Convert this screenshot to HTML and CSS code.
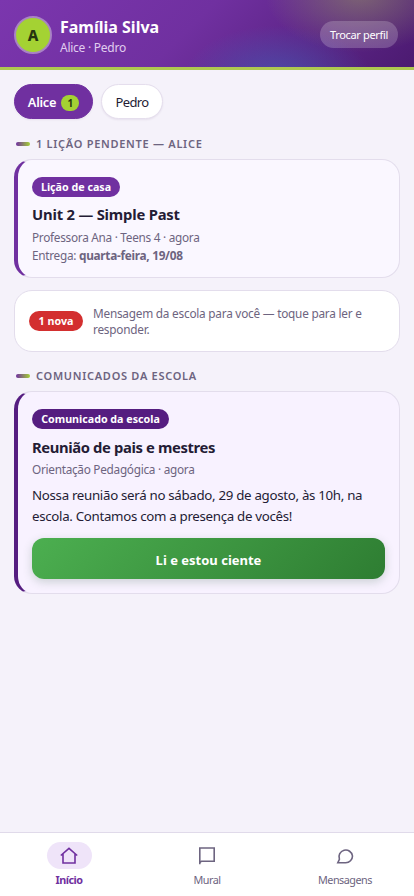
FILE: index.html
```html
<!DOCTYPE html>
<html lang="pt-BR">
<head>
<meta charset="utf-8">
<meta name="viewport" content="width=device-width, initial-scale=1">
<title>Família Silva</title>
<link rel="stylesheet" href="styles.css">
</head>
<body>
<header class="top">
  <div class="avatar">A</div>
  <div class="who">
    <h1>Família Silva</h1>
    <p>Alice · Pedro</p>
  </div>
  <button class="switch">Trocar perfil</button>
</header>
<main>
  <div class="tabs">
    <button class="tab active">Alice <span class="count">1</span></button>
    <button class="tab">Pedro</button>
  </div>
  <h2 class="section first">1 lição pendente — Alice</h2>
  <article class="card lesson">
    <span class="tag">Lição de casa</span>
    <h3 class="unit">Unit 2 — Simple Past</h3>
    <p class="meta">Professora Ana · Teens 4 · agora</p>
    <p class="meta due">Entrega: <b>quarta-feira, 19/08</b></p>
  </article>
  <article class="card notice">
    <span class="tag new">1 nova</span>
    <p>Mensagem da escola para você — toque para ler e<br>responder.</p>
  </article>
  <h2 class="section second">Comunicados da escola</h2>
  <article class="card news">
    <span class="tag">Comunicado da escola</span>
    <h3>Reunião de pais e mestres</h3>
    <p class="meta origin">Orientação Pedagógica · agora</p>
    <p class="body">Nossa reunião será no sábado, 29 de agosto, às 10h, na<br>escola. Contamos com a presença de vocês!</p>
    <button class="ack">Li e estou ciente</button>
  </article>
</main>
<nav class="bottom">
  <a class="item active"><span class="icon"><svg viewBox="0 0 20 20"><path d="M1.800 9.500 10 2.300l8.200 7.200M4 8v9h12V8"/></svg></span><span class="label">Início</span></a>
  <a class="item"><span class="icon"><svg viewBox="0 0 20 20"><path d="M2.800 18.200V2h14.400v13.200H4.500L2.800 16.500"/></svg></span><span class="label">Mural</span></a>
  <a class="item"><span class="icon"><svg viewBox="0 0 20 20"><path d="M17.500 10a6.800 6.800 0 0 1-6.800 6.800H2.800l1.600-3.500A6.800 6.800 0 1 1 17.500 10z"/></svg></span><span class="label">Mensagens</span></a>
</nav>
</body>
</html>
```
FILE: styles.css
```css
* { box-sizing: border-box; margin: 0; padding: 0; }
body {
  height: 896px;
  display: flex;
  flex-direction: column;
  overflow: hidden;
  background: #f5f2fa;
  color: #241c35;
  font-family: "Segoe UI", "Noto Sans", sans-serif;
}
button { font-family: inherit; border: 0; }
h1, h2, h3, p, button, .tag, .label { white-space: nowrap; }

.top {
  height: 70px;
  flex: none;
  display: flex;
  align-items: center;
  padding: 0 16px 0 14px;
  border-bottom: 3px solid #aec850;
  background:
    radial-gradient(ellipse 95px 58px at 87% -8%, rgba(150, 150, 100, .55), transparent),
    radial-gradient(ellipse 95px 55px at 67% 115%, rgba(65, 95, 185, .65), transparent),
    linear-gradient(135deg, #7b36ae 0%, #7030a0 45%, #4b1a70 100%);
  background-origin: border-box;
}
.avatar {
  width: 38px;
  height: 38px;
  margin-top: 2px;
  border: 2px solid #a982c5;
  border-radius: 50%;
  background: #a4d233;
  color: #273510;
  font-size: 15px;
  font-weight: 800;
  line-height: 35px;
  text-align: center;
}
.who { flex: 1; margin: 6px 0 0 8px; color: #fff; }
.who h1 { font-size: 16px; font-weight: 700; line-height: 21px; }
.who p { margin-top: 2px; font-size: 12px; line-height: 16px; letter-spacing: -.25px; color: #e0cdef; }
.switch {
  width: 78px;
  height: 27px;
  margin-top: 2px;
  border-radius: 14px;
  background: rgba(255, 255, 255, .2);
  color: #fff;
  font-size: 11px;
  letter-spacing: -.35px;
}

main { flex: 1; padding: 14px 14px 0; }
.tabs { display: flex; gap: 8px; }
.tab {
  height: 35px;
  width: 62px;
  border: 1px solid #e5deed;
  border-radius: 18px;
  background: #fff;
  box-shadow: 0 1px 2px rgba(60, 30, 90, .08);
  color: #241c35;
  font-size: 13px;
  letter-spacing: -.6px;
}
.tab.active {
  width: 79px;
  display: flex;
  align-items: center;
  justify-content: center;
  gap: 5px;
  border-color: #7030a0;
  background: #7030a0;
  color: #fff;
  font-weight: 600;
  font-size: 12.800px;
  letter-spacing: -.3px;
}
.count {
  width: 18px;
  height: 16px;
  margin-top: 2px;
  border-radius: 8px;
  background: #a4d233;
  color: #273510;
  font-size: 10px;
  font-weight: 700;
  line-height: 16px;
}
.section {
  display: flex;
  align-items: center;
  gap: 6px;
  height: 16px;
  padding-left: 2px;
  color: #6d6480;
  font-size: 11px;
  font-weight: 600;
  line-height: 14px;
  letter-spacing: .72px;
  padding-bottom: 1px;
  text-transform: uppercase;
}
.section::before {
  content: "";
  width: 14px;
  height: 4px;
  margin-top: 1px;
  border-radius: 2px;
  background: linear-gradient(90deg, #7030a0, #a4d233);
}
.first { margin: 17px 0 7px; }
.second { margin: 16px 0 7px; }
.card {
  border: 1px solid #e3ddec;
  border-radius: 18px;
  background: #fff;
}
.lesson, .news { border-left-width: 4px; padding-left: 14px; }
.lesson { height: 119px; padding-top: 17px; border-left-color: #7030a0; background: #faf7ff; }
.news { height: 203px; padding-top: 17px; border-left-color: #551d80; background: #f8f2ff; }
.tag {
  display: block;
  width: 88px;
  height: 20px;
  border-radius: 10px;
  background: #7030a0;
  color: #fff;
  font-size: 10.700px;
  font-weight: 700;
  line-height: 21px;
  text-align: center;
}
.news .tag { width: 137px; background: #551d80; }
h3 { margin-top: 7px; font-size: 14.800px; font-weight: 700; line-height: 21px; letter-spacing: -.2px; }
.news h3 { margin-top: 8px; letter-spacing: -.38px; }
.meta { margin-top: 4px; font-size: 11.800px; line-height: 16px; letter-spacing: -.28px; color: #6d6480; }
.due { margin-top: 2px; }
.news .meta { margin-top: 3px; }
.notice {
  height: 62px;
  margin-top: 12px;
  padding-left: 14px;
  display: flex;
  align-items: center;
  gap: 10px;
  color: #6d6480;
  font-size: 11.800px;
  letter-spacing: -.23px;
  line-height: 16px;
}
.tag.new { width: 54px; background: #d32f2f; letter-spacing: 0; }
.body { margin-top: 8px; font-size: 13.300px; line-height: 21px; letter-spacing: -.31px; }
.ack {
  display: block;
  width: 353px;
  height: 41px;
  margin-top: 11px;
  padding-top: 2px;
  border-radius: 12px;
  background: linear-gradient(135deg, #4caf50, #2e7d32);
  box-shadow: 0 3px 10px rgba(46, 90, 60, .22);
  color: #fff;
  font-size: 13px;
  font-weight: 700;
}
.bottom {
  height: 64px;
  flex: none;
  display: grid;
  grid-template-columns: repeat(3, 1fr);
  border-top: 1px solid #e0daea;
  background: #fff;
}
.item {
  display: flex;
  flex-direction: column;
  align-items: center;
  padding-top: 9px;
  color: #6d6480;
  font-size: 10.800px;
  letter-spacing: -.5px;
}
.item.active { color: #7030a0; font-weight: 700; }
.icon {
  width: 45px;
  height: 27px;
  display: flex;
  align-items: center;
  justify-content: center;
  border-radius: 14px;
}
.active .icon { background: #efe4f9; }
.icon svg {
  width: 20px;
  height: 20px;
  fill: none;
  stroke: currentColor;
  stroke-width: 1.600;
}
.label { margin-top: 3px; line-height: 16px; }
```
